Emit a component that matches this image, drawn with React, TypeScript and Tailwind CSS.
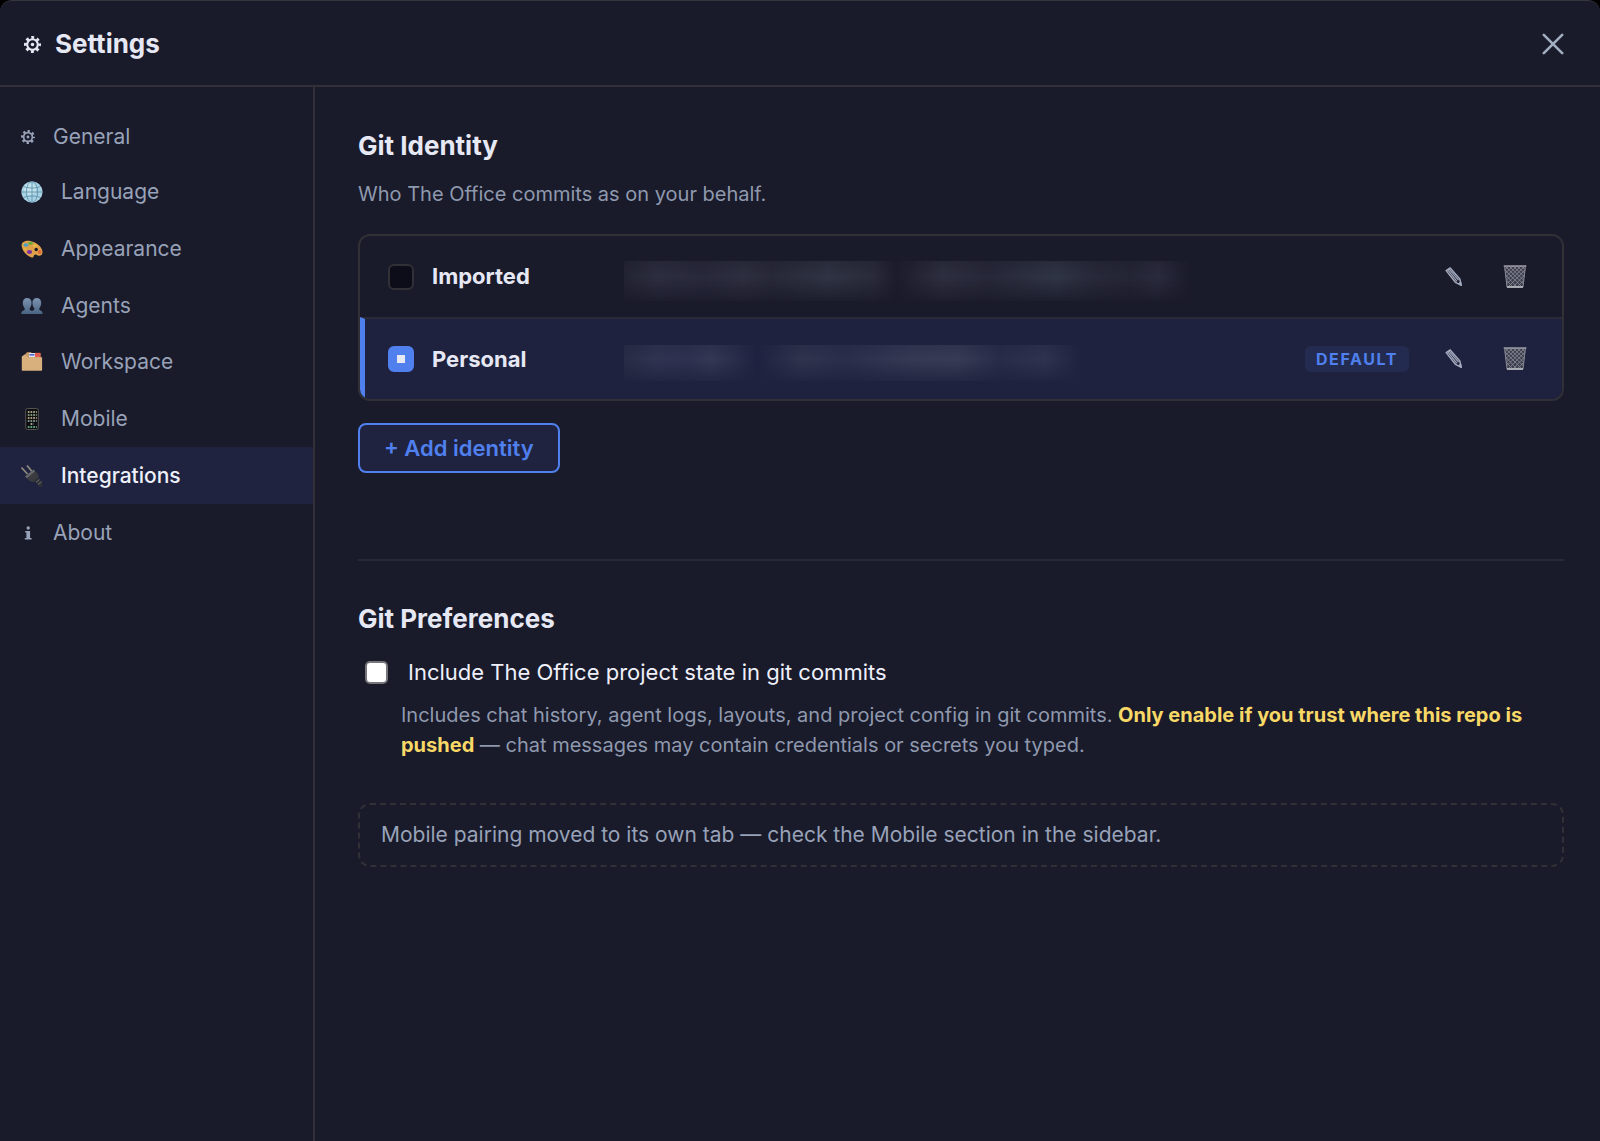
import { useState } from "react";

function GearIcon({ className }: { className?: string }) {
  return (
    <svg viewBox="0 0 24 24" className={className} fill="none" stroke="currentColor" aria-hidden="true">
      <circle cx="12" cy="12" r="7.500" strokeWidth="3" />
      <circle cx="12" cy="12" r="2.500" fill="currentColor" stroke="none" />
      <circle cx="12" cy="12" r="10" strokeWidth="4" strokeDasharray="4 3.854" strokeDashoffset="2" />
    </svg>
  );
}

function GlobeIcon() {
  return (
    <svg viewBox="0 0 22 22" className="size-[22px]" fill="none" aria-hidden="true">
      <circle cx="11" cy="11" r="10.6" fill="#a9d3e4" />
      <circle cx="9" cy="8" r="6" fill="#c3e2ec" />
      <g stroke="#5f93ad" strokeWidth="0.9">
        <path d="M11 .5v21M.5 11h21M2.5 5.5c5 2 12 2 17 0M2.5 16.500c5-2 12-2 17 0" />
        <ellipse cx="11" cy="11" rx="5.6" ry="10.500" />
      </g>
    </svg>
  );
}

function PaletteIcon() {
  return (
    <svg viewBox="0 0 22 22" className="size-[22px]" aria-hidden="true">
      <path
        d="M.6 7.500C.4 3.600 5 2 9.500 3c6 1.300 11.600 6 12 10.800.2 3-2 4.600-4.600 3.600-1.700-.7-3-1.400-3.800-.2-.8 1.300-.4 2.600-2.200 2.300C6.500 18.500.9 13 .6 7.500Z"
        fill="#dfa04a"
      />
      <circle cx="15.200" cy="11.500" r="1.700" fill="#191a2a" />
      <ellipse cx="5" cy="7" rx="2.600" ry="1.700" fill="#4aa3c7" />
      <ellipse cx="9.600" cy="5.300" rx="2.400" ry="1.500" fill="#5fae3c" />
      <ellipse cx="14" cy="7.600" rx="2" ry="1.200" fill="#e5c43d" />
      <ellipse cx="8.500" cy="14" rx="2.600" ry="2" fill="#7a2fa0" />
      <ellipse cx="18.700" cy="14" rx="1.700" ry="1.900" fill="#e0663a" />
      <ellipse cx="4" cy="11" rx="1.500" ry="1.300" fill="#e2b53e" />
    </svg>
  );
}

function PeopleIcon() {
  return (
    <svg viewBox="0 0 22 22" className="size-[22px]" aria-hidden="true">
      <defs>
        <linearGradient id="people" x1="0" y1="0" x2="0" y2="1">
          <stop offset="0" stopColor="#7c93b0" />
          <stop offset="1" stopColor="#496483" />
        </linearGradient>
      </defs>
      <path
        d="M6.200 3c2.900 0 4.500 2 4.400 5-.1 2.300-.8 4-1.900 5.200v1.600c1 .7 1.800.9 2.300 1.300.5-.4 1.300-.6 2.300-1.300v-1.600c-1.100-1.200-1.800-2.900-1.900-5.200-.1-3 1.500-5 4.400-5s4.500 2 4.400 5c-.1 2.300-.8 4-1.900 5.200v1.600c1.400 1 3.200 1 3.400 4.200H.3c.2-3.200 2-3.200 3.400-4.200v-1.600C2.600 12 1.900 10.300 1.800 8c-.1-3 1.500-5 4.400-5Z"
        fill="url(#people)"
      />
    </svg>
  );
}

function FolderIcon() {
  return (
    <svg viewBox="0 0 22 22" className="size-[22px]" aria-hidden="true">
      <path d="M4 3.500 6 1.200h4l1 1h8.500V8H4Z" fill="#c99d68" />
      <rect x="8" y="2" width="6" height="4" fill="#dfe3f5" />
      <rect x="8.500" y="3" width="5" height="1.600" fill="#5265c4" />
      <rect x="14" y="1.800" width="5.500" height="4.400" fill="#e25b4c" />
      <path d="M.8 5.500 4 3.200 6.500 6.300h14.600v12.500c0 .7-.3 1-1 1H1.800c-.7 0-1-.3-1-1Z" fill="#d8b07e" />
    </svg>
  );
}

function PhoneIcon() {
  return (
    <svg viewBox="0 0 22 22" className="size-[22px]" aria-hidden="true">
      <rect x="4.700" y=".5" width="12.600" height="21" rx="1.800" fill="#0d0e13" stroke="#55534e" />
      <g strokeWidth="1.600" strokeDasharray="1.700 1">
        <path d="M6.800 4h9" stroke="#cfcf9e" />
        <path d="M6.800 7h9" stroke="#a3c298" />
        <path d="M6.800 10h9" stroke="#dcc698" />
        <path d="M6.800 13h9" stroke="#a6bca6" />
        <path d="M9.600 16h3" stroke="#d0d4ac" />
        <path d="M6.800 19h9" stroke="#7ad6a2" />
      </g>
    </svg>
  );
}

function PlugIcon() {
  return (
    <svg viewBox="0 0 22 22" className="size-[22px]" fill="none" aria-hidden="true">
      <path d="m.5 2.500 6 6.500M6 .5l5 6" stroke="#8f8a7d" strokeWidth="1.700" />
      <path d="m4.500 11.500 8-6.500 4 3.500c1.500 2 1.500 4 .5 5.500l-2.500 2.500c-2 1-5 .5-7-1.500Z" fill="#3a3b3f" />
      <path d="m4 11.500 8.500-7 1.700 1.800-8.400 7Z" fill="#66676a" />
      <path d="m13.500 15.500 3-3 5 5.500-.3 4-3.200-.5Z" fill="#303135" />
      <path d="m15 17.500 3.500-3M17 19.500l3.500-3" stroke="#6c6d70" />
    </svg>
  );
}

function InfoIcon() {
  return (
    <svg viewBox="0 0 12 14" className="h-[14px] w-[14px]" fill="currentColor" aria-hidden="true">
      <circle cx="6.200" cy="2" r="1.700" />
      <path d="M3.200 5h4.900v7h1.500v1.500H2.800V12h1.600V6.500H3.200Z" />
    </svg>
  );
}

function PencilIcon() {
  return (
    <svg viewBox="0 0 18 20" className="h-5 w-[18px]" fill="none" stroke="#a3abbf" aria-hidden="true">
      <path d="M1.200 3.600 5.200 1l9.600 11 1.500 6.300-5.900-3Z" strokeWidth="1.500" strokeLinejoin="round" />
      <path d="m2.600 2.700 9.300 11.600M4 1.800l9.500 11.300" strokeWidth="1.200" />
      <path d="m13.500 16.500 2.800 1.800-.7-3.300Z" fill="#a3abbf" />
    </svg>
  );
}

function TrashIcon() {
  return (
    <svg viewBox="0 0 24 24" className="size-6" fill="none" aria-hidden="true">
      <path d="M1.500 1h21l-2.400 21.400H3.900Z" fill="#3d3f4f" />
      <g stroke="#8b8d98" strokeWidth=".8">
        <path d="m2 5 17 17M2 1l18.500 18M6 1l15 14.500M10 1l11.500 11M14 1l8 7.500M18 1l4.500 4M2.500 10 14 22M3 15l7 7" />
        <path d="M22 5 5 22M22 1 3.500 19M18 1 3 15.500M14 1 2.500 12M10 1 2 8.500M6 1 1.500 5M21.500 10 10 22M21 15l-7 7" />
      </g>
      <path d="M1.600 1.500 4 22M22.400 1.500 20 22" stroke="#858791" />
      <path d="M.7 1h22.600" stroke="#a2a4ad" strokeWidth="1.400" />
      <path d="M4 22h16" stroke="#b4b6bd" strokeWidth="1.800" />
    </svg>
  );
}

const navItems = [
  { label: "General", icon: <GearIcon className="size-[14px]" />, row: "h-[55px]" },
  { label: "Language", icon: <GlobeIcon />, row: "h-14" },
  { label: "Appearance", icon: <PaletteIcon />, row: "h-[57px]" },
  { label: "Agents", icon: <PeopleIcon />, row: "h-[57px]" },
  { label: "Workspace", icon: <FolderIcon />, row: "h-14" },
  { label: "Mobile", icon: <PhoneIcon />, row: "h-[57px]" },
  { label: "Integrations", icon: <PlugIcon />, row: "h-[57px]" },
  { label: "About", icon: <InfoIcon />, row: "h-[57px]" },
];

const identities = [
  {
    name: "Imported",
    // contact details stay hidden
    mask: "h-10 w-[568px] bg-[linear-gradient(90deg,#232433,#2d2e40_6%,#28293b_14%,#2e2f40_21%,#282939_26%,#303444_36%,#2a2b3b_44%,#1c1c2c_48%,#2e2f40_56%,#272839_64%,#303545_76%,#28293a_83%,#242535_89%,#2a2b3d_94%,#191a2a)]",
  },
  {
    name: "Personal",
    mask: "h-9 w-[458px] bg-[linear-gradient(90deg,#282c46,#303451_7%,#2e3250_14%,#343854_19%,#2a2e4b_24%,#1f2240_29%,#30344f_39%,#2a2e4b_48%,#363a55_63%,#373c56_73%,#282c49_82%,#2f3350_92%,#1f223e)]",
  },
];

export default function App() {
  const [tab, setTab] = useState("Integrations");
  const [selected, setSelected] = useState("Personal");
  const [include, setInclude] = useState(false);

  return (
    <div className="min-h-screen bg-black font-['Inter',sans-serif]">
      <div className="flex min-h-screen flex-col rounded-t-xl border-t border-[#35353c] bg-[#191a2a] text-[#e6e8f4]">
        <header className="flex h-[86px] shrink-0 items-center justify-between border-b-2 border-[#303036] pt-[2px] pr-9 pl-6">
          <h1 className="flex items-center gap-[14px] text-[26px] leading-8 font-bold">
            <GearIcon className="size-[17px]" />
            Settings
          </h1>
          <button aria-label="Close" className="text-[#a0aec0]">
            <svg viewBox="0 0 22 22" className="size-[22px]" fill="none" stroke="currentColor" strokeWidth="2.600" strokeLinecap="round">
              <path d="m1.800 1.800 18.400 18.400M20.200 1.800 1.800 20.200" />
            </svg>
          </button>
        </header>

        <div className="flex flex-1">
          <nav className="w-[315px] shrink-0 border-r-2 border-[#303036] pt-[22px]">
            {navItems.map((item) => (
              <button
                key={item.label}
                onClick={() => setTab(item.label)}
                className={`flex w-full items-center gap-[18px] pl-[21px] text-left text-[21px] ${item.row} ${
                  tab === item.label ? "bg-[#1f2340] font-medium text-[#eef0fa]" : "text-[#98a2b8]"
                }`}
              >
                {item.icon}
                {item.label}
              </button>
            ))}
          </nav>

          <main className="min-w-0 flex-1 pt-[43px] pr-9 pb-10 pl-[43px]">
            <section className="border-b-2 border-[#282936] pb-[86px]">
              <h2 className="text-[26px] leading-8 font-bold">Git Identity</h2>
              <p className="mt-4 text-[20px] leading-8 text-[#8f99ae]">Who The Office commits as on your behalf.</p>

              <ul className="mt-6 overflow-hidden rounded-xl border-2 border-[#303036]">
                {identities.map((id, i) => {
                  const on = selected === id.name;
                  return (
                    <li
                      key={id.name}
                      className={`flex items-center border-l-[5px] pr-[35px] pl-[23px] ${
                        i > 0 ? "h-[82px] border-t-2 border-t-[#2a2b38]" : "h-[81px]"
                      } ${on ? "border-l-[#5080ee] bg-[#1f223e]" : "border-l-transparent"}`}
                    >
                      <label className="flex w-[236px] shrink-0 items-center gap-[18px] text-[22px] font-bold">
                        <span className="grid">
                          <input
                            type="radio"
                            name="identity"
                            checked={on}
                            onChange={() => setSelected(id.name)}
                            className="col-start-1 row-start-1 size-[26px] appearance-none rounded-md border-2 border-[#303036] bg-[#0c0d18] checked:border-[#5080ee] checked:bg-[#5080ee]"
                          />
                          {on && <span className="pointer-events-none col-start-1 row-start-1 size-2 place-self-center bg-[#e6e8f4]" />}
                        </span>
                        {id.name}
                      </label>
                      <div className={`mt-2 [mask-image:linear-gradient(180deg,#000a,#000_40%,#0003)] ${id.mask}`} />
                      <div className="ml-auto flex items-center">
                        {on && (
                          <span className="mr-9 rounded-md bg-[#232c50] px-[11px] text-base leading-[26px] font-bold tracking-widest text-[#5080ee]">
                            DEFAULT
                          </span>
                        )}
                        <button aria-label={`Edit ${id.name}`} className="mr-10">
                          <PencilIcon />
                        </button>
                        <button aria-label={`Delete ${id.name}`}>
                          <TrashIcon />
                        </button>
                      </div>
                    </li>
                  );
                })}
              </ul>

              <button className="mt-[22px] h-[50px] rounded-lg border-2 border-[#5080ee] bg-[#1f2340] px-6 text-[22px] font-semibold text-[#5080ee]">
                + Add identity
              </button>
            </section>

            <section className="pt-[42px]">
              <h2 className="text-[26px] leading-8 font-bold">Git Preferences</h2>
              <div className="mt-[21px] flex items-center gap-5 pl-[7px]">
                <input
                  id="include-state"
                  type="checkbox"
                  checked={include}
                  onChange={(e) => setInclude(e.target.checked)}
                  className="size-[23px] appearance-none rounded-[5px] border-2 border-[#76767a] bg-white checked:bg-[#5080ee]"
                />
                <label htmlFor="include-state" className="text-[22px] leading-8 text-[#eef0fa]">
                  Include The Office project state in git commits
                </label>
              </div>
              <p className="mt-3 pl-[43px] text-[20px] leading-[30px] text-[#8f99ae]">
                Includes chat history, agent logs, layouts, and project config in git commits.{" "}
                <strong className="font-bold text-[#f8d866]">Only enable if you trust where this repo is pushed</strong> — chat
                messages may contain credentials or secrets you typed.
              </p>
              <p className="mt-[43px] rounded-xl border-2 border-dashed border-[#303036] px-[21px] py-[15px] text-[21px] leading-[30px] text-[#98a2b8]">
                Mobile pairing moved to its own tab — check the Mobile section in the sidebar.
              </p>
            </section>
          </main>
        </div>
      </div>
    </div>
  );
}
